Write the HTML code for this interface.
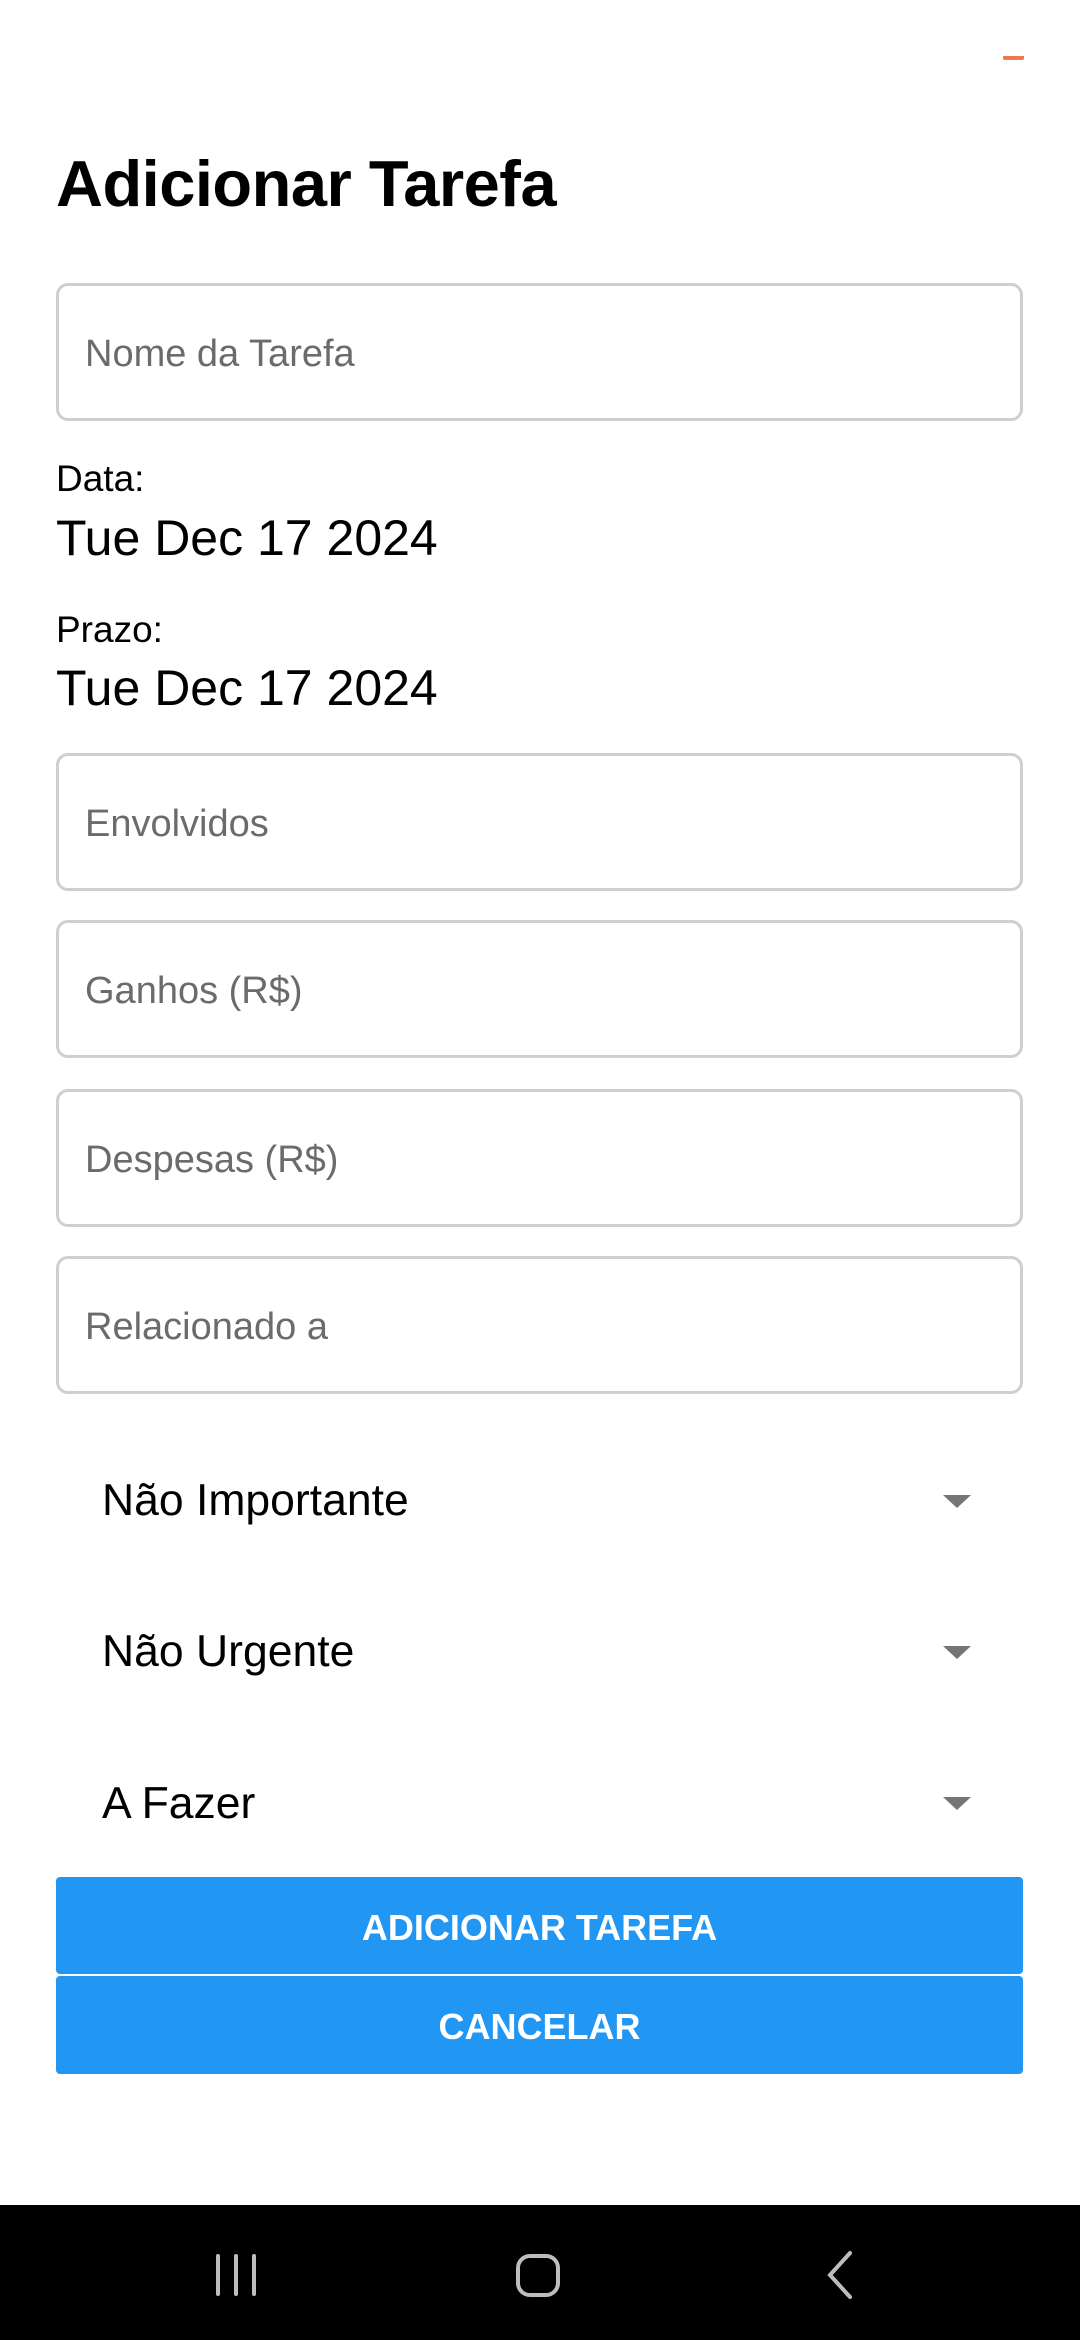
<!DOCTYPE html>
<html><head><meta charset="utf-8"><style>
*{margin:0;padding:0;box-sizing:border-box}
body{width:1080px;height:2340px;background:#fff;position:relative;overflow:hidden;font-family:"Liberation Sans",sans-serif;color:#000}
.a{position:absolute;white-space:nowrap}
.box{position:absolute;left:56px;width:967px;height:138px;border:3px solid #cfcfcf;border-radius:12px}
.ph{position:absolute;left:85px;font-size:38px;color:#6b6b6b;line-height:1}
.dd{position:absolute;left:102px;font-size:44.5px;line-height:1}
.arr{position:absolute;left:943px;width:0;height:0;border-left:14px solid transparent;border-right:14px solid transparent;border-top:13px solid #757575}
.btn{position:absolute;left:56px;width:967px;background:#2196F3;color:#fff;font-size:36px;font-weight:bold;text-align:center;border-radius:4px}
</style></head><body>
<div class="a" style="left:1003px;top:56px;width:21px;height:4px;background:#f07850;border-radius:0 0 2px 2px"></div>
<div class="a" style="left:56px;top:151px;font-size:65px;font-weight:bold;line-height:1;letter-spacing:-0.5px">Adicionar Tarefa</div>

<div class="box" style="top:283px"></div>
<div class="ph" style="top:335px">Nome da Tarefa</div>

<div class="a" style="left:56px;top:460px;font-size:37px;line-height:1">Data:</div>
<div class="a" style="left:56px;top:513px;font-size:50px;line-height:1">Tue Dec 17 2024</div>
<div class="a" style="left:56px;top:611px;font-size:37px;line-height:1">Prazo:</div>
<div class="a" style="left:56px;top:663px;font-size:50px;line-height:1">Tue Dec 17 2024</div>

<div class="box" style="top:753px"></div>
<div class="ph" style="top:805px">Envolvidos</div>
<div class="box" style="top:920px"></div>
<div class="ph" style="top:972px">Ganhos (R$)</div>
<div class="box" style="top:1089px"></div>
<div class="ph" style="top:1141px">Despesas (R$)</div>
<div class="box" style="top:1256px"></div>
<div class="ph" style="top:1308px">Relacionado a</div>

<div class="dd" style="top:1479px">Não Importante</div>
<div class="arr" style="top:1495px"></div>
<div class="dd" style="top:1630px">Não Urgente</div>
<div class="arr" style="top:1646px"></div>
<div class="dd" style="top:1782px">A Fazer</div>
<div class="arr" style="top:1797px"></div>

<div class="btn" style="top:1877px;height:97px;line-height:102px">ADICIONAR TAREFA</div>
<div class="btn" style="top:1976px;height:98px;line-height:102px">CANCELAR</div>

<div class="a" style="left:0;top:2205px;width:1080px;height:135px;background:#000"></div>
<svg class="a" style="left:0;top:2205px" width="1080" height="135" viewBox="0 2205 1080 135">
<g stroke="#bdbdbd" stroke-width="4" fill="none" stroke-linecap="round">
<line x1="218" y1="2256" x2="218" y2="2294"/><line x1="236" y1="2256" x2="236" y2="2294"/><line x1="254" y1="2256" x2="254" y2="2294"/>
<rect x="518" y="2256" width="40" height="39" rx="12"/>
<polyline points="850,2253 830,2275 850,2297"/>
</g></svg>
</body></html>
